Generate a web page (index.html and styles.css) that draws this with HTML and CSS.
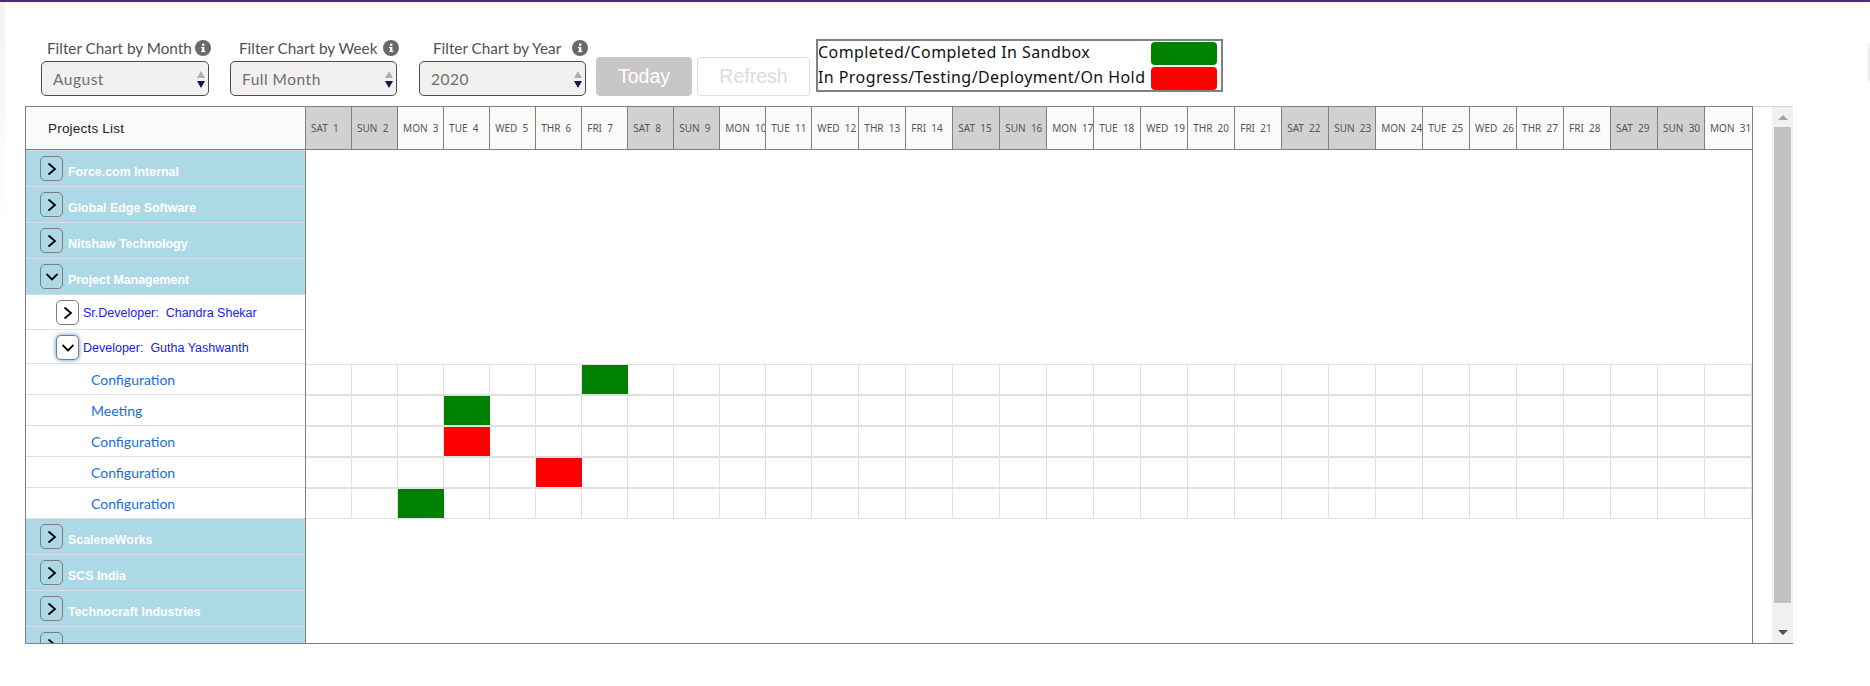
FILE: index.html
```html
<!DOCTYPE html>
<html lang="en">
<head>
<meta charset="utf-8">
<title>Projects Gantt</title>
<link rel="stylesheet" href="styles.css">
</head>
<body>
<div class="topbar"></div>
<div class="page">
  <div class="toolbar">
    <div class="filter filter-month">
      <div class="filter-label"><span>Filter Chart by Month</span><svg class="info" viewBox="0 0 16 16"><circle cx="8" cy="8" r="8"/><rect x="7" y="7" width="2.4" height="5"/><rect x="7" y="3.6" width="2.4" height="2.2"/><rect x="6" y="7" width="1.5" height="1.1"/><rect x="6" y="11" width="4.4" height="1.1"/></svg></div>
      <div class="select"><span>August</span><svg class="updown" viewBox="0 0 8 18"><path class="up" d="M0 8 L4 1 L8 8Z"/><path class="down" d="M0 11 L8 11 L4 18Z"/></svg></div>
    </div>
    <div class="filter filter-week">
      <div class="filter-label"><span>Filter Chart by Week</span><svg class="info" viewBox="0 0 16 16"><circle cx="8" cy="8" r="8"/><rect x="7" y="7" width="2.4" height="5"/><rect x="7" y="3.6" width="2.4" height="2.2"/><rect x="6" y="7" width="1.5" height="1.1"/><rect x="6" y="11" width="4.4" height="1.1"/></svg></div>
      <div class="select"><span>Full Month</span><svg class="updown" viewBox="0 0 8 18"><path class="up" d="M0 8 L4 1 L8 8Z"/><path class="down" d="M0 11 L8 11 L4 18Z"/></svg></div>
    </div>
    <div class="filter filter-year">
      <div class="filter-label"><span>Filter Chart by Year</span><svg class="info" viewBox="0 0 16 16"><circle cx="8" cy="8" r="8"/><rect x="7" y="7" width="2.4" height="5"/><rect x="7" y="3.6" width="2.4" height="2.2"/><rect x="6" y="7" width="1.5" height="1.1"/><rect x="6" y="11" width="4.4" height="1.1"/></svg></div>
      <div class="select"><span>2020</span><svg class="updown" viewBox="0 0 8 18"><path class="up" d="M0 8 L4 1 L8 8Z"/><path class="down" d="M0 11 L8 11 L4 18Z"/></svg></div>
    </div>
    <button class="btn btn-today">Today</button>
    <button class="btn btn-refresh">Refresh</button>
    <div class="legend">
      <div class="legend-row"><span>Completed/Completed In Sandbox</span><i class="swatch green"></i></div>
      <div class="legend-row"><span>In Progress/Testing/Deployment/On Hold</span><i class="swatch red"></i></div>
    </div>
  </div>

  <div class="chart-wrap">
    <div class="chart">
      <div class="head">
        <div class="head-title">Projects List</div>
        <div class="days" id="days"></div>
      </div>
      <div class="body">
        <div class="list">
          <div class="row account"><button class="tog"><svg viewBox="0 0 12 14"><path d="M2.5 1.5 L9 7 L2.5 12.5"/></svg></button><span>Force.com Internal</span></div>
          <div class="row account"><button class="tog"><svg viewBox="0 0 12 14"><path d="M2.5 1.5 L9 7 L2.5 12.5"/></svg></button><span>Global Edge Software</span></div>
          <div class="row account"><button class="tog"><svg viewBox="0 0 12 14"><path d="M2.5 1.5 L9 7 L2.5 12.5"/></svg></button><span>Nitshaw Technology</span></div>
          <div class="row account"><button class="tog"><svg viewBox="0 0 12 14"><path d="M0.5 4 L6 9.5 L11.5 4"/></svg></button><span>Project Management</span></div>
          <div class="row person"><button class="tog"><svg viewBox="0 0 12 14"><path d="M2.5 1.5 L9 7 L2.5 12.5"/></svg></button><span>Sr.Developer:&nbsp; Chandra Shekar</span></div>
          <div class="row person person-open"><button class="tog focus"><svg viewBox="0 0 12 14"><path d="M0.5 4 L6 9.5 L11.5 4"/></svg></button><span>Developer:&nbsp; Gutha Yashwanth</span></div>
          <div class="row task"><a>Configuration</a></div>
          <div class="row task"><a>Meeting</a></div>
          <div class="row task"><a>Configuration</a></div>
          <div class="row task"><a>Configuration</a></div>
          <div class="row task"><a>Configuration</a></div>
          <div class="row account"><button class="tog"><svg viewBox="0 0 12 14"><path d="M2.5 1.5 L9 7 L2.5 12.5"/></svg></button><span>ScaleneWorks</span></div>
          <div class="row account"><button class="tog"><svg viewBox="0 0 12 14"><path d="M2.5 1.5 L9 7 L2.5 12.5"/></svg></button><span>SCS India</span></div>
          <div class="row account"><button class="tog"><svg viewBox="0 0 12 14"><path d="M2.5 1.5 L9 7 L2.5 12.5"/></svg></button><span>Technocraft Industries</span></div>
          <div class="row account"><button class="tog"><svg viewBox="0 0 12 14"><path d="M2.5 1.5 L9 7 L2.5 12.5"/></svg></button></div>
        </div>
        <div class="grid" id="grid"></div>
      </div>
    </div>
    <div class="gutter"></div>
    <div class="scrollbar">
      <div class="sb-btn"><i class="arrow-up"></i></div>
      <div class="sb-thumb"></div>
      <div class="sb-btn sb-end"><i class="arrow-down"></i></div>
    </div>
  </div>
</div>
<div class="edge-tab"></div>
<script src="app.js"></script>
</body>
</html>
```

FILE: styles.css
```css
* { box-sizing: border-box; }
html, body { margin: 0; padding: 0; }
body {
  width: 1870px;
  height: 686px;
  overflow: hidden;
  background: #fff;
  font-family: "Open Sans", "Liberation Sans", sans-serif;
  position: relative;
}
.topbar { height: 2px; background: #4b2a86; box-shadow: 0 1px 3px rgba(0,0,0,.08); }
.page {
  padding-left: 25px;
  height: 684px;
  background: linear-gradient(#f3f3f3, #fff) no-repeat 0 0 / 5px 235px;
}
.toolbar { height: 104px; display: flex; padding-top: 37px; align-items: flex-start; }
.filter { display: flex; flex-direction: column; }
.filter-month { width: 168px; margin-left: 16px; }
.filter-week { width: 167px; margin-left: 21px; }
.filter-year { width: 167px; margin-left: 22px; }
.filter-label {
  display: flex;
  align-items: center;
  height: 22px;
  padding-bottom: 4px;
  color: #54504c;
  white-space: nowrap;
  font-family: "Lato", sans-serif;
  font-size: 15.3px;
}
.filter-month .filter-label { padding-left: 6px; gap: 3px; }
.filter-week .filter-label { padding-left: 9px; gap: 6px; }
.filter-year .filter-label { padding-left: 14px; gap: 11px; }
.info { width: 16px; height: 16px; flex: none; fill: #6b6966; }
.info rect { fill: #fff; }
.select {
  height: 35px;
  border: 1px solid #4d4d4d;
  border-radius: 5px;
  background: #f2f1f0;
  display: flex;
  align-items: center;
  justify-content: space-between;
  padding: 0 3px 0 11px;
  font-size: 15.5px;
  color: #706e6b;
  font-family: "Lato", sans-serif;
  letter-spacing: .5px;
}
.updown { width: 8px; height: 18px; }
.up { fill: #a9adc0; }
.down { fill: #0f1b44; }
.btn {
  height: 39px;
  border-radius: 4px;
  font-family: "Liberation Sans", sans-serif;
  font-size: 19.5px;
  padding: 0;
  margin-top: 18px;
}
.btn-today { width: 96px; margin-left: 10px; background: #c9c7c5; border: 1px solid #c9c7c5; color: #fff; }
.btn-refresh { width: 113px; margin-left: 5px; background: #fff; border: 1px solid #dddbda; color: #dddbda; }
.legend {
  width: 407px;
  height: 53px;
  margin-left: 6px;
  border: 2px solid #808080;
  padding: 1px 4px 0 0;
  display: flex;
  flex-direction: column;
  gap: 2px;
  font-size: 16px;
  letter-spacing: .42px;
  color: #111;
  font-family: "Noto Sans", sans-serif;
}
.legend-row { display: flex; justify-content: space-between; align-items: center; height: 23px; white-space: nowrap; }
.legend-row span { margin-top: -4px; }
.swatch { display: block; width: 66px; height: 23px; border-radius: 4px; }
.green { background: #008000; }
.red { background: #ff0000; }

.chart-wrap { display: flex; height: 538px; width: 1768px; }
.chart {
  width: 1728px;
  border: 1px solid #808080;
  display: flex;
  flex-direction: column;
  overflow: hidden;
}
.head { display: flex; height: 43px; border-bottom: 1px solid #808080; flex: none; }
.head-title {
  width: 280px;
  flex: none;
  background: #fafaf9;
  border-right: 1px solid #808080;
  display: flex;
  align-items: center;
  padding-left: 22px;
  font-family: "Liberation Sans", sans-serif;
  font-size: 13.5px;
  letter-spacing: .2px;
  color: #222;
}
.days, .gantt-row { display: grid; grid-template-columns: repeat(11, 46.05fr) repeat(20, 47fr); }
.days { flex: 1; }
.day {
  background: #fafaf9;
  border-right: 1px solid #808080;
  font-size: 10px;
  font-family: "Noto Sans", sans-serif;
  color: #555;
  display: flex;
  align-items: center;
  padding-left: 5px;
  white-space: pre;
  overflow: hidden;
}
.day:last-child { border-right: 0; }
.day.wk { background: #d1d1d1; }
.body { flex: 1; display: flex; min-height: 0; }
.list { width: 280px; flex: none; border-right: 1px solid #808080; overflow: hidden; border-top: 1px solid #d5dde0; }
.row { display: flex; white-space: nowrap; }
.account {
  height: 36px;
  background: #add8e6;
  border-bottom: 1px solid #d5dde0;
  padding-left: 14px;
  padding-top: 5px;
  color: #fff;
  font-family: "Liberation Sans", sans-serif;
  font-weight: bold;
  font-size: 12.4px;
}
.account span { margin: 9px 0 0 5px; line-height: 14px; }
.person {
  height: 35px;
  border-bottom: 1px solid #dedede;
  padding-left: 30px;
  padding-top: 5px;
  color: #1a1aee;
  font-family: "Liberation Sans", sans-serif;
  font-size: 12.5px;
}
.person-open { height: 34px; }
.person span { margin: 6px 0 0 4px; line-height: 14px; }
.task {
  height: 31px;
  border-bottom: 1px solid #dedede;
  padding-left: 65px;
  align-items: center;
  font-size: 14px;
  color: #1a6dd8;
  font-family: "Lato", sans-serif;
}
.tog {
  width: 23px;
  height: 25px;
  flex: none;
  padding: 0;
  border: 1px solid #7d7d7d;
  border-radius: 5px;
  background: transparent;
  display: flex;
  align-items: center;
  justify-content: center;
}
.person .tog { background: #fff; }
.tog svg { width: 12px; height: 14px; fill: none; stroke: #000; stroke-width: 1.8; }
.tog.focus { box-shadow: 0 0 4px #3f8fe0; }
.grid { flex: 1; padding-top: 215px; display: flex; flex-direction: column; }
.gantt-row { height: 31px; border-bottom: 2px solid #e0e0e0; }
.gantt-row:first-child { box-shadow: 0 -1px 0 #e0e0e0; }
.gantt-row:last-child { height: 30px; border-bottom-width: 1px; }
.cell { border-right: 1px solid #e0e0e0; }
.cell.g { background: #008000; border-right: 0; }
.cell.r { background: #ff0000; border-right: 0; }

.gutter { width: 19px; flex: none; border-top: 1px solid #d8d8d8; border-bottom: 1px solid #808080; }
.scrollbar { width: 21px; flex: none; display: flex; flex-direction: column; background: #f1f1f1; border-top: 1px solid #d8d8d8; border-bottom: 1px solid #808080; }
.sb-btn { height: 20px; display: flex; align-items: center; justify-content: center; flex: none; }
.sb-end { height: 40px; align-items: flex-end; padding-bottom: 8px; }
.sb-thumb { flex: 1; margin: 0 2px; background: #c1c1c1; }
.arrow-up { width: 0; height: 0; border: 5px solid transparent; border-top: 0; border-bottom: 5px solid #a3a3a3; }
.arrow-down { width: 0; height: 0; border: 5px solid transparent; border-bottom: 0; border-top: 5px solid #505050; }
.edge-tab { position: absolute; right: 0; top: 43px; width: 2px; height: 38px; background: #f0f0f0; box-shadow: 0 0 2px rgba(0,0,0,.1); }
```

FILE: app.js
```js
var names = ['SAT','SUN','MON','TUE','WED','THR','FRI'];
var days = document.getElementById('days');
for (var d = 1; d <= 31; d++) {
  var n = names[(d - 1) % 7];
  var el = document.createElement('div');
  el.className = 'day' + (n === 'SAT' || n === 'SUN' ? ' wk' : '');
  el.textContent = n + '  ' + d;
  days.appendChild(el);
}
var marks = [[6,'g'],[3,'g'],[3,'r'],[5,'r'],[2,'g']];
var grid = document.getElementById('grid');
marks.forEach(function (m) {
  var row = document.createElement('div');
  row.className = 'gantt-row';
  for (var i = 0; i < 31; i++) {
    var c = document.createElement('div');
    c.className = 'cell' + (i === m[0] ? ' ' + m[1] : '');
    row.appendChild(c);
  }
  grid.appendChild(row);
});
```
